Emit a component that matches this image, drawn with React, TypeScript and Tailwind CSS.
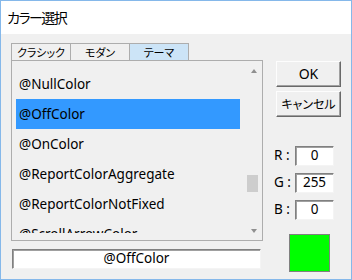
import React from 'react';

const items = [
  '@NullColor',
  '@OffColor',
  '@OnColor',
  '@ReportColorAggregate',
  '@ReportColorNotFixed',
  '@ScrollArrowColor',
];

const ui = { fontFamily: '"Noto Sans", "Noto Sans CJK JP", sans-serif' };
const jp = { fontFamily: '"Noto Sans CJK JP", sans-serif', fontFeatureSettings: '"palt"' };

function Tab({ label, active, first }: { label: string; active?: boolean; first?: boolean }) {
  return (
    <div
      className={`w-[60px] h-[17px] border-t border-l border-r border-[#adadad] flex items-center justify-center text-[11px] text-black leading-none ${
        first ? '' : '-ml-px'
      } ${active ? 'bg-[#cce4f7]' : 'bg-[#f0f0f0]'}`}
      style={jp}
    >
      {label}
    </div>
  );
}

function Button({ children }: { children: React.ReactNode }) {
  return (
    <div className="ml-[2px] w-[65px] h-[26px] flex items-center justify-center bg-[#f0f0f0] border border-t-[#fdfdfd] border-l-[#fdfdfd] border-r-[#696969] border-b-[#696969] shadow-[inset_-1px_-1px_0_#a0a0a0] text-[14px] text-black leading-none">
      {children}
    </div>
  );
}

function Field({ label, value }: { label: string; value: string }) {
  return (
    <div className="flex items-center h-[20px]">
      <span className="w-[21px] text-[13.5px] text-black leading-none" style={ui}>
        {label}
      </span>
      <div className="w-[39px] h-[20px] bg-white border border-t-[#808080] border-l-[#808080] border-r-[#f4f4f4] border-b-[#f4f4f4] shadow-[inset_1px_1px_0_#a0a0a0] flex items-center justify-center text-[13.5px] text-black leading-none">
        {value}
      </div>
    </div>
  );
}

export default function App() {
  return (
    <div
      className="w-[352px] h-[280px] border border-[#85b8ea] bg-[#f0f0f0] flex flex-col overflow-hidden"
      style={ui}
    >
      <div
        className="h-[33px] bg-white pl-[6px] flex items-center text-[14px] tracking-[-1.5px] text-black"
        style={jp}
      >
        カラー選択
      </div>

      <div className="flex pl-[10px]">
        <div className="pt-[9px] w-[252px] flex flex-col">
          <div className="flex">
            <Tab label="クラシック" first />
            <Tab label="モダン" />
            <Tab label="テーマ" active />
          </div>

          <div className="w-[252px] h-[181px] border border-[#adadad] flex">
            <div className="ml-[4px] mt-[8px] w-[224px] h-[164px] overflow-hidden flex flex-col">
              {items.map((it) => (
                <div
                  key={it}
                  className={`h-[30px] shrink-0 flex items-center pl-[3px] text-[13.5px] text-black ${
                    it === '@OffColor' ? 'bg-[#3399ff]' : ''
                  }`}
                >
                  {it}
                </div>
              ))}
            </div>
            <div className="ml-[6px] w-[13px] flex flex-col items-center pt-[8px]">
              <svg width="6" height="4" viewBox="0 0 6 4" className="ml-[2px]">
                <polygon points="3,0 6,4 0,4" fill="#8f8f8f" />
              </svg>
              <div className="mt-[102px] w-[11px] h-[17px] bg-[#cdcdcd]" />
              <svg width="6" height="4" viewBox="0 0 6 4" className="mt-[37px] ml-[2px]">
                <polygon points="0,0 6,0 3,4" fill="#8f8f8f" />
              </svg>
            </div>
          </div>

          <div className="mt-[8px] ml-px w-[249px] h-[20px] bg-white border border-t-[#808080] border-l-[#808080] border-r-[#f4f4f4] border-b-[#f4f4f4] shadow-[inset_1px_1px_0_#a0a0a0] flex items-center justify-center text-[13.5px] text-black leading-none">
            @OffColor
          </div>
        </div>

        <div className="ml-[11px] pt-[27px] w-[67px] flex flex-col">
          <Button>OK</Button>
          <div className="mt-[4px]">
            <Button>
              <span className="text-[12px]" style={jp}>
                キャンセル
              </span>
            </Button>
          </div>
          <div className="mt-[29px] flex flex-col gap-[7px]">
            <Field label="R :" value="0" />
            <Field label="G :" value="255" />
            <Field label="B :" value="0" />
          </div>
          <div className="mt-[14px] ml-[15px] w-[41px] h-[38px] bg-[#00ff00] border border-[#808080]" />
        </div>
      </div>
    </div>
  );
}
